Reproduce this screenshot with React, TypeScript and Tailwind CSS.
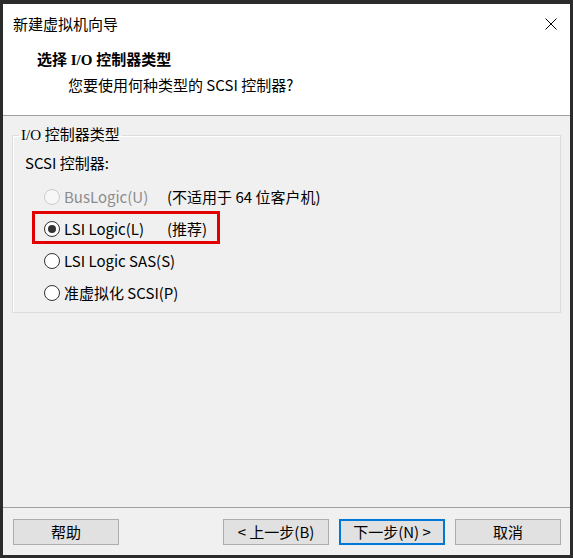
import type { ReactNode } from 'react';

// ─── Fonts ───
const uiFont = { fontFamily: '"Noto Sans CJK SC", "Noto Sans", sans-serif' };
const serifLatin = { fontFamily: '"Liberation Serif", "Noto Sans CJK SC", serif' };

// ─── Radio ───
function RadioDot({ checked, disabled }: { checked?: boolean; disabled?: boolean }) {
	return (
		<span
			className={`flex items-center justify-center w-[16px] h-[16px] rounded-full border shrink-0 ${
				disabled ? 'border-[#cccccc] bg-[#f7f7f7]' : 'border-[#333333] bg-white'
			}`}
		>
			{checked && <span className="w-[8px] h-[8px] rounded-full bg-[#333333]" />}
		</span>
	);
}

function RadioRow({
	label,
	note,
	checked,
	disabled,
	children,
}: {
	label: string;
	note?: string;
	checked?: boolean;
	disabled?: boolean;
	children?: ReactNode;
}) {
	return (
		<div className="relative flex items-center h-[32px] whitespace-nowrap">
			<RadioDot checked={checked} disabled={disabled} />
			<span className={`ml-[4px] min-w-[103px] ${disabled ? 'text-[#8c8c8c]' : 'text-black'}`}>{label}</span>
			{note && <span className="text-black">{note}</span>}
			{children}
		</div>
	);
}

// ─── Button ───
function WinButton({ children, primary }: { children: ReactNode; primary?: boolean }) {
	return (
		<button
			className={`h-[26px] w-[106px] bg-[#e1e1e1] text-[15px] text-black flex items-center justify-center ${
				primary ? 'border-2 border-[#0078d7]' : 'border border-[#adadad]'
			}`}
		>
			{children}
		</button>
	);
}

export default function App() {
	return (
		<div
			className="w-[573px] h-[558px] bg-[#2b2b2b] pt-[4px] pl-[3px] pr-[3px] pb-[3px] text-[15px] leading-[20px] text-black"
			style={uiFont}
		>
			<div className="flex flex-col h-full bg-[#f0f0f0]">
				{/* Title bar */}
				<div className="flex items-center justify-between h-[40px] bg-white pl-[10px] pr-[13px]">
					<span>新建虚拟机向导</span>
					<svg width="12" height="12" viewBox="0 0 12 12" fill="none" stroke="#000" strokeWidth="1">
						<path d="M0.5 0.5 L11.5 11.5 M11.5 0.5 L0.5 11.5" />
					</svg>
				</div>

				{/* Header */}
				<div className="flex flex-col h-[72px] bg-white border-b border-[#a0a0a0] pt-[6px]">
					<div className="pl-[34px] font-bold" style={serifLatin}>
						选择 I/O 控制器类型
					</div>
					<div className="pl-[65px] mt-[5px]">您要使用何种类型的 SCSI 控制器?</div>
				</div>

				{/* Body */}
				<div className="flex-1 px-[9px] pt-[9px]">
					<fieldset className="border border-[#dcdcdc] shadow-[inset_1px_1px_0_#ffffff] px-0 pb-[3px]">
						<legend className="ml-[6px] px-[2px] leading-[20px]" style={serifLatin}>
							I/O 控制器类型
						</legend>
						<div className="pl-[12px] mt-[8px] mb-[8px]">SCSI 控制器:</div>
						<div className="pl-[31px]">
							<RadioRow label="BusLogic(U)" note="(不适用于 64 位客户机)" disabled />
							<RadioRow label="LSI Logic(L)" note="(推荐)" checked>
								<span className="absolute left-[-12px] top-[-2px] w-[188px] h-[33px] border-[3px] border-[#e30000]" />
							</RadioRow>
							<RadioRow label="LSI Logic SAS(S)" />
							<RadioRow label="准虚拟化 SCSI(P)" />
						</div>
					</fieldset>
				</div>

				{/* Footer */}
				<div className="flex items-start h-[48px] border-t border-[#a0a0a0] pt-[11px] pl-[10px] pr-[9px]">
					<WinButton>帮助</WinButton>
					<div className="flex-1" />
					<div className="flex gap-[10px]">
						<WinButton>&lt; 上一步(B)</WinButton>
						<WinButton primary>下一步(N) &gt;</WinButton>
						<WinButton>取消</WinButton>
					</div>
				</div>
			</div>
		</div>
	);
}
